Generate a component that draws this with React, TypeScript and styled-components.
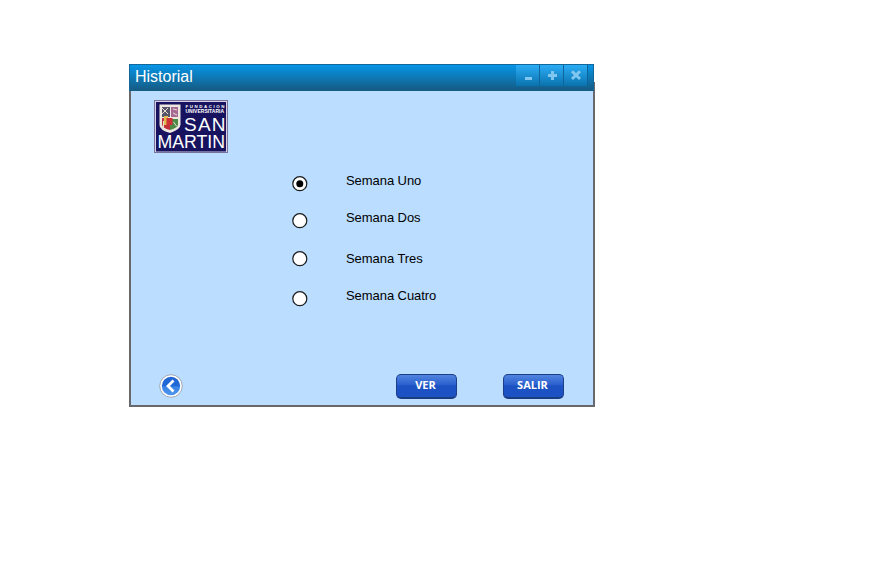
import React from "react";
import styled, { createGlobalStyle } from "styled-components";

const GlobalStyle = createGlobalStyle`
  body { margin: 0; background: #fff; font-family: "Liberation Sans", Arial, sans-serif; }
  * { box-sizing: border-box; }
`;

const Page = styled.main`
  height: 567px;
  padding: 64px 0 0 129px;
  overflow: hidden;
`;

const Window = styled.section`
  width: 466px;
`;

const TitleBar = styled.header`
  position: relative;
  z-index: 1;
  display: flex;
  width: 465px;
  height: 27px;
  padding: 0 5px;
  border: 1px solid #12689b;
  border-bottom: 0;
  background: linear-gradient(#0795e7, #145e88 92%);
`;

const Title = styled.h1`
  flex: 1;
  margin: 0;
  font-size: 16px;
  line-height: 23px;
  font-weight: 400;
  color: #fff;
`;

const Controls = styled.div`
  display: flex;
  height: 21px;
  border-right: 1px solid #0c639a;
`;

const ControlButton = styled.button`
  width: 24px;
  height: 21px;
  padding: 0;
  border: 0;
  border-right: 1px solid #0d659b;
  background: linear-gradient(#2bacf5, #0a72ae);
  svg { display: block; }
  &:last-child { border-right: 0; width: 23px; }
`;

const Body = styled.div`
  display: flex;
  flex-direction: column;
  height: 325px;
  margin-top: -9px;
  padding: 16px 29px 4px 23px;
  border: 2px solid #66686c;
  background: #bbddff;
`;

const Logo = styled.svg`
  display: block;
  width: 75px;
  height: 54px;
  overflow: visible;
`;

const Options = styled.div`
  flex: 1;
  padding-left: 138px;
`;

const Option = styled.label<{ $gap: number }>`
  display: flex;
  height: 16px;
  margin-top: ${(p) => p.$gap}px;
`;

const Radio = styled.svg`
  width: 16px;
  height: 16px;
`;

const OptionText = styled.span<{ $lift: number }>`
  margin: ${(p) => -p.$lift}px 0 0 38px;
  font-size: 13px;
  line-height: 16px;
  letter-spacing: -0.06px;
  white-space: nowrap;
  color: #000;
`;

const Footer = styled.footer`
  display: flex;
  height: 27px;
  padding-left: 5px;
`;

const BackButton = styled.button`
  width: 24px;
  height: 24px;
  margin-right: auto;
  padding: 0;
  border: 0;
  background: none;
  svg { display: block; }
`;

const ActionButton = styled.button`
  width: 61px;
  height: 25px;
  margin-left: 46px;
  padding: 0 2px 3px 0;
  border: 1px solid #1c3d87;
  border-bottom: 2px solid #1b3d7e;
  border-radius: 5px;
  background: linear-gradient(#5084df, #2d62cf 42%, #1b51c1 50%, #1d52c6);
  font: 700 11px/20px "Open Sans", sans-serif;
  color: #fff;
`;

const glyphs = [
  { name: "Minimizar", d: "M9 13.5H16" },
  { name: "Maximizar", d: "M8 10.5H17M12.5 6V15" },
  { name: "Cerrar", d: "M8 6.2L16 14M16 6.2L8 14" },
];

const weeks = [
  { label: "Semana Uno", gap: 22, lift: 3 },
  { label: "Semana Dos", gap: 21, lift: 3 },
  { label: "Semana Tres", gap: 22, lift: 0 },
  { label: "Semana Cuatro", gap: 24, lift: 3 },
];

function UniversityLogo() {
  return (
    <Logo viewBox="0 0 75 54" role="img" aria-label="Fundación Universitaria San Martín">
      <path fill="#77739a" d="M0 0h74v53H0z" />
      <path fill="#d9d2e6" d="M1 1h72v51H1z" />
      <path fill="#17135f" d="M2 2h70v49.5H2z" />
      <path fill="#ece7df" d="M5.5 4.5h21v20q0 5-10.5 8.5Q5.5 30 5.5 25z" />
      <path fill="#57536a" d="M8 7h8v10H8z" />
      <path fill="#a76a94" d="M17 7h7v10h-7z" />
      <path fill="#c4303a" d="M8 18h8v12Q8 28 8 24z" />
      <path fill="#4d8a46" d="M16 19h8v6q-1 3-8 5z" />
      <path fill="#e0bb50" d="M10 16h4v9h-4z" />
      <path fill="#cf2f35" d="M12.5 18h6v7h-6z" />
      <path stroke="#e7dfcf" fill="none" d="M8 8l6 6m0-6l-6 6m11-5 4 1m-4 3 4 2M9.5 21v6m10-5 3 4" />
      <g fill="#fff" fontFamily="Liberation Sans, Arial, sans-serif">
        <g fontWeight="700">
          <text x="31.5" y="7.8" fontSize="4.4" textLength="39">FUNDACION</text>
          <text x="31.5" y="13" fontSize="5" textLength="38.5" lengthAdjust="spacingAndGlyphs">UNIVERSITARIA</text>
        </g>
        <text x="30" y="31.4" fontSize="19" textLength="41.5">SAN</text>
        <text x="3.5" y="48.2" fontSize="19" textLength="67.5" lengthAdjust="spacingAndGlyphs">MARTIN</text>
      </g>
    </Logo>
  );
}

export default function App() {
  const [selected, setSelected] = React.useState(0);
  return (
    <Page>
      <GlobalStyle />
      <Window>
        <TitleBar>
          <Title>Historial</Title>
          <Controls>
            {glyphs.map((g) => (
              <ControlButton key={g.name} aria-label={g.name}>
                <svg width="23" height="21" fill="none" stroke="#80c6ee" strokeWidth="3">
                  <path d={g.d} />
                </svg>
              </ControlButton>
            ))}
          </Controls>
        </TitleBar>
        <Body>
          <UniversityLogo />
          <Options role="radiogroup">
            {weeks.map((w, i) => (
              <Option key={w.label} $gap={w.gap} onClick={() => setSelected(i)}>
                <Radio viewBox="0 0 16 16" role="radio" aria-checked={i === selected}>
                  <circle cx="7.8" cy="7.7" r="7" fill="#fff" stroke="#1a1a1a" strokeWidth="1.2" />
                  {i === selected && <circle cx="7.8" cy="7.7" r="3.5" fill="#000" />}
                </Radio>
                <OptionText $lift={w.lift}>{w.label}</OptionText>
              </Option>
            ))}
          </Options>
          <Footer>
            <BackButton aria-label="Volver">
              <svg width="24" height="24" viewBox="0 0 24 24">
                <defs>
                  <linearGradient id="back" x2="0" y2="1">
                    <stop stopColor="#2065d2" />
                    <stop offset=".52" stopColor="#2168d8" />
                    <stop offset=".53" stopColor="#3b82e5" />
                    <stop offset="1" stopColor="#4d96ee" />
                  </linearGradient>
                </defs>
                <circle cx="12" cy="12" r="11.3" fill="#fff" stroke="#9ba6b2" />
                <circle cx="12" cy="12" r="9.2" fill="url(#back)" />
                <path d="M14.5 6.5L9 12l5.5 5.5" fill="none" stroke="#fff" strokeWidth="2.8" />
              </svg>
            </BackButton>
            <ActionButton>VER</ActionButton>
            <ActionButton>SALIR</ActionButton>
          </Footer>
        </Body>
      </Window>
    </Page>
  );
}
